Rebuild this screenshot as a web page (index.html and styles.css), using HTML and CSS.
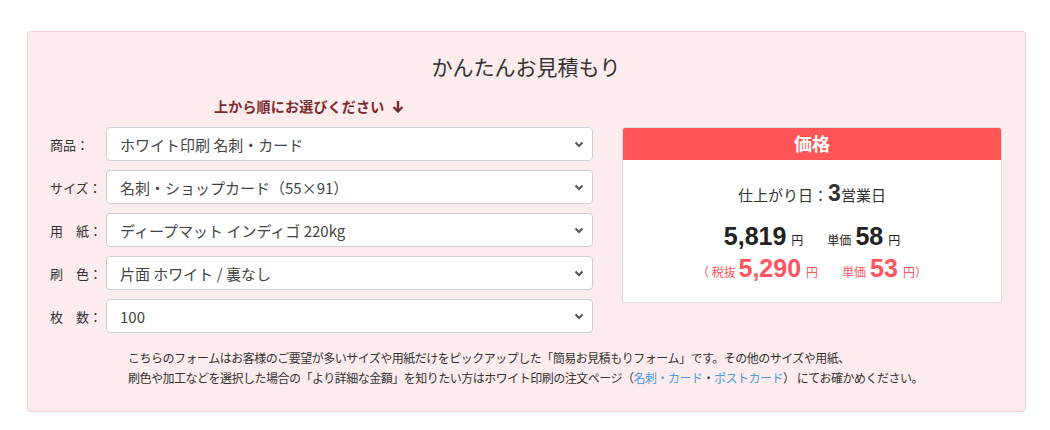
FILE: index.html
```html
<!DOCTYPE html>
<html lang="ja">
<head>
<meta charset="utf-8">
<link rel="stylesheet" href="styles.css">
</head>
<body>
<div class="estimate">
  <h2 class="title">かんたんお見積もり</h2>
  <div class="main">
    <div class="form-col">
      <div class="hint">上から順にお選びください <svg class="arrow" width="12" height="13" viewBox="0 0 12 13"><path d="M6 1 V11.5 M1.5 7 L6 11.5 L10.5 7" fill="none" stroke="#7b2a2c" stroke-width="2.4"/></svg></div>
      <div class="row"><span class="label">商品：</span><div class="select"><span>ホワイト印刷 名刺・カード</span><svg class="chev" width="10" height="7" viewBox="0 0 10 7"><path d="M1.5 1.5 L5 5 L8.5 1.5" fill="none" stroke="#555" stroke-width="2"/></svg></div></div>
      <div class="row"><span class="label">サイズ：</span><div class="select"><span>名刺・ショップカード（55×91）</span><svg class="chev" width="10" height="7" viewBox="0 0 10 7"><path d="M1.5 1.5 L5 5 L8.5 1.5" fill="none" stroke="#555" stroke-width="2"/></svg></div></div>
      <div class="row"><span class="label">用　紙：</span><div class="select"><span>ディープマット インディゴ 220kg</span><svg class="chev" width="10" height="7" viewBox="0 0 10 7"><path d="M1.5 1.5 L5 5 L8.5 1.5" fill="none" stroke="#555" stroke-width="2"/></svg></div></div>
      <div class="row"><span class="label">刷　色：</span><div class="select"><span>片面 ホワイト / 裏なし</span><svg class="chev" width="10" height="7" viewBox="0 0 10 7"><path d="M1.5 1.5 L5 5 L8.5 1.5" fill="none" stroke="#555" stroke-width="2"/></svg></div></div>
      <div class="row"><span class="label">枚　数：</span><div class="select"><span>100</span><svg class="chev" width="10" height="7" viewBox="0 0 10 7"><path d="M1.5 1.5 L5 5 L8.5 1.5" fill="none" stroke="#555" stroke-width="2"/></svg></div></div>
    </div>
    <div class="price-col">
      <div class="price-box">
        <div class="price-head">価格</div>
        <div class="price-body">
          <div class="delivery">仕上がり日：<b class="days">3</b>営業日</div>
          <div class="total"><b class="num">5,819</b><span class="yen">円</span><span class="unit-label">単価</span><b class="num">58</b><span class="yen">円</span></div>
          <div class="notax">（ 税抜 <b class="num">5,290</b><span class="yen">円</span><span class="unit-label">単価</span><b class="num">53</b><span class="yen">円）</span></div>
        </div>
      </div>
    </div>
  </div>
  <p class="note">こちらのフォームはお客様のご要望が多いサイズや用紙だけをピックアップした「簡易お見積もりフォーム」です。その他のサイズや用紙、<br>刷色や加工などを選択した場合の「より詳細な金額」を知りたい方はホワイト印刷の注文ページ（<a href="#">名刺・カード</a>・<a href="#">ポストカード</a>） にてお確かめください。</p>
</div>
</body>
</html>
```

FILE: styles.css
```css
* { box-sizing: border-box; }
html, body { margin: 0; padding: 0; background: #fff; }
body {
  font-family: "Noto Sans CJK JP", "Noto Sans", sans-serif;
  color: #333;
  padding: 31px 24px 0 27px;
}
.estimate {
  width: 999px;
  height: 381px;
  background: #fdeced;
  border: 1px solid #f6cfd2;
  border-radius: 4px;
  padding: 0 23px 0 22px;
}
.title {
  margin: 0;
  padding-top: 20px;
  height: 63px;
  text-align: center;
  font-size: 21px;
  font-weight: 400;
  line-height: 28px;
  color: #333;
}
.main {
  display: flex;
  justify-content: space-between;
}
.form-col { width: 543px; }
.hint {
  height: 32px;
  padding-left: 164px;
  font-size: 14px;
  font-weight: 700;
  color: #7b2a2c;
  line-height: 22px;
  letter-spacing: 0.2px;
}
.arrow { display: inline-block; vertical-align: -1px; margin-left: 4px; }
.row {
  display: flex;
  align-items: center;
  height: 34px;
  margin-bottom: 9px;
}
.label {
  width: 56px;
  font-size: 13px;
  color: #333;
}
.select {
  flex: 1;
  height: 34px;
  background: #fff;
  border: 1px solid #ccd0d6;
  border-radius: 4px;
  display: flex;
  align-items: center;
  justify-content: space-between;
  padding: 0 8px 0 13px;
  font-size: 15px;
  color: #444;
}
.chev { display: block; }
.price-col { width: 380px; padding-top: 32px; }
.price-box {
  background: #fff;
  border: 1px solid #dcdcdc;
  border-radius: 3px;
  overflow: hidden;
  height: 176px;
}
.price-head {
  height: 32px;
  background: #ff5556;
  color: #fff;
  font-size: 18px;
  font-weight: 700;
  text-align: center;
  line-height: 30px;
}
.price-body { text-align: center; padding-top: 18px; }
.delivery { font-size: 15px; height: 30px; line-height: 30px; color: #333; }
.days { font-size: 23px; font-family: "Liberation Sans", sans-serif; }
.total { margin-top: 12px; height: 32px; line-height: 32px; color: #222; }
.num { font-family: "Liberation Sans", Arial, sans-serif; font-size: 25px; font-weight: 700; }
.yen { font-size: 12px; margin-left: 5px; }
.unit-label { font-size: 12px; margin-left: 24px; margin-right: 4px; }
.notax { height: 32px; line-height: 32px; color: #ff5560; font-size: 12px; }
.notax .num { font-size: 25px; }
.note {
  margin: 6px 0 0 78px;
  font-size: 12px;
  line-height: 20px;
  color: #333;
  letter-spacing: -0.5px;
}
.note a { color: #4a9ae8; text-decoration: none; }
```
